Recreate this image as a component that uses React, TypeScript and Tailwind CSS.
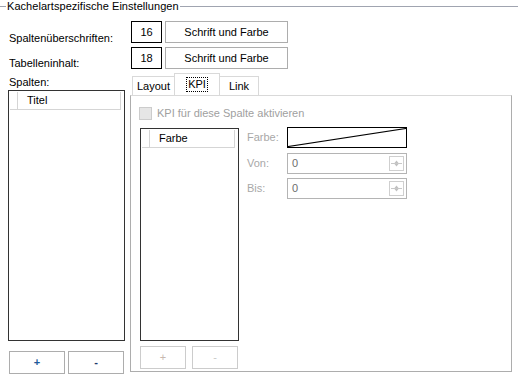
import React from "react";

function ListBox({ header, className }: { header: string; className: string }) {
  return (
    <div className={`border border-[#333] bg-white p-px ${className}`}>
      <div className="flex h-[18px] pr-[2px]">
        <div className="w-[8px] border-b border-r border-[#d5d5d5]" />
        <div className="flex flex-1 items-center border-b border-r border-[#d5d5d5] pl-[9px]">{header}</div>
      </div>
    </div>
  );
}

function Spinner({ value }: { value: string }) {
  return (
    <div className="flex h-[21px] w-[120px] items-center border border-[#b4b4b4] pl-[4px] text-[#6d6d6d]">
      <span className="flex-1">{value}</span>
      <div className="mr-[2px] flex h-[15px] w-[15px] items-center justify-center border border-[#cfcfcf]">
        <svg width="11" height="9" viewBox="0 0 11 9">
          <path d="M0 4.5H11" stroke="#c8c8c8" />
          <path d="M5.5 1.5L7.5 4H3.5Z" fill="#c0c0c0" />
          <path d="M5.5 7.5L7.5 5H3.5Z" fill="#c0c0c0" />
        </svg>
      </div>
    </div>
  );
}

export default function App() {
  return (
    <div className="relative h-[379px] w-[518px] overflow-hidden bg-white text-[11px] leading-[13px] text-black [font-family:'Liberation_Sans',Arial,sans-serif]">
      {/* Gruppenrahmen-Titel */}
      <div className="flex h-[13px] items-center">
        <div className="h-px w-[6px] bg-[#a0a4b0]" />
        <span className="px-px tracking-[0.05px]">Kachelartspezifische Einstellungen</span>
        <div className="h-px flex-1 bg-[#a0a4b0]" />
      </div>

      <div className="mt-[8px] flex h-[22px] items-center pl-[9px]">
        <span className="mt-[13px] w-[122px]">Spaltenüberschriften:</span>
        <div className="flex h-[22px] w-[31px] items-center justify-center border border-black">16</div>
        <button className="ml-[3px] h-[22px] w-[123px] border border-[#adadad] bg-white">Schrift und Farbe</button>
      </div>
      <div className="mt-[4px] flex h-[22px] items-center pl-[9px]">
        <span className="mt-[10px] w-[122px]">Tabelleninhalt:</span>
        <div className="flex h-[22px] w-[31px] items-center justify-center border border-black">18</div>
        <button className="ml-[3px] h-[22px] w-[123px] border border-[#adadad] bg-white">Schrift und Farbe</button>
      </div>

      <div className="mt-[5px] flex">
        {/* Spalten-Liste */}
        <div className="ml-[8px] flex w-[117px] flex-col">
          <span className="ml-[1px] h-[16px] pt-[2px]">Spalten:</span>
          <ListBox header="Titel" className="h-[251px]" />
          <div className="mt-[10px] flex gap-[3px] pl-[1px]">
            <button className="h-[23px] w-[56px] border border-[#adadad] bg-white font-bold text-[#1e5a9a]">+</button>
            <button className="h-[23px] w-[56px] border border-[#adadad] bg-white font-bold text-[#1e3a6a]">-</button>
          </div>
        </div>

        {/* Tabs */}
        <div className="ml-[5px] flex w-[382px] flex-col">
          <div className="flex h-[21px] items-end pl-[2px]">
            <div className="flex h-[19px] w-[43px] items-center justify-center border border-b-0 border-[#d9d9d9] pt-[1px]">Layout</div>
            <div className="-mx-px flex h-[22px] w-[46px] items-center justify-center border border-b-0 border-[#d9d9d9] bg-white">
              <span className="border border-dotted border-black px-px">KPI</span>
            </div>
            <div className="flex h-[19px] w-[40px] items-center justify-center border border-b-0 border-[#d9d9d9] pt-[1px]">Link</div>
          </div>
          <div className="relative h-[277px] border border-[#adadad] border-t-[#d9d9d9]">
            <div className="ml-[8px] mt-[11px] flex items-center text-[#a0a0a0]">
              <div className="h-[13px] w-[13px] border border-[#cccccc] bg-[#e6e6e6]" />
              <span className="ml-[5px]">KPI für diese Spalte aktivieren</span>
            </div>
            <div className="mt-[8px] flex">
              <div className="ml-[9px] flex w-[99px] flex-col">
                <ListBox header="Farbe" className="h-[213px]" />
                <div className="mt-[5px] flex gap-[6px]">
                  <button className="h-[23px] w-[46px] border border-[#cccccc] bg-white text-[#c8b8b0]">+</button>
                  <button className="h-[23px] w-[46px] border border-[#cccccc] bg-white text-[#c8c8c8]">-</button>
                </div>
              </div>
              <div className="ml-[8px] -mt-px flex flex-col gap-[4px] text-[#a8a8a8]">
                <div className="flex h-[21px] items-center">
                  <span className="w-[40px]">Farbe:</span>
                  <div className="h-[21px] w-[120px] border border-black">
                    <svg width="118" height="19" viewBox="0 0 118 19" className="block">
                      <path d="M0 18.5L118 0.5" stroke="#000" strokeWidth="1.2" />
                    </svg>
                  </div>
                </div>
                <div className="mt-[1px] flex items-center">
                  <span className="w-[40px]">Von:</span>
                  <Spinner value="0" />
                </div>
                <div className="flex items-center">
                  <span className="w-[40px]">Bis:</span>
                  <Spinner value="0" />
                </div>
              </div>
            </div>
          </div>
        </div>
      </div>
    </div>
  );
}
